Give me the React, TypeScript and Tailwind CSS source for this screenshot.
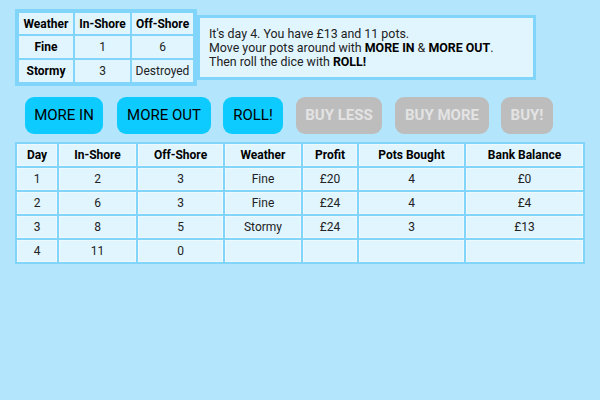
import React from "react";

const F = { fontFamily: "Roboto, 'Noto Sans', sans-serif" };

function Btn({ label, w, on }: { label: string; w: string; on: boolean }) {
  return (
    <div
      className={
        "h-[37px] rounded-[9px] flex items-center justify-center text-[15px] shrink-0 " +
        w +
        (on ? " bg-[#0dcbff] text-black" : " bg-[#bdbdbd] text-[#e3e3e3] font-bold")
      }
    >
      {label}
    </div>
  );
}

export default function App() {
  const rows = [
    ["1", "2", "3", "Fine", "£20", "4", "£0"],
    ["2", "6", "3", "Fine", "£24", "4", "£4"],
    ["3", "8", "5", "Stormy", "£24", "3", "£13"],
    ["4", "11", "0", "", "", "", ""],
  ];
  const heads = ["Day", "In-Shore", "Off-Shore", "Weather", "Profit", "Pots Bought", "Bank Balance"];
  const widths = ["w-[40px]", "w-[77px]", "w-[85px]", "w-[76px]", "w-[54px]", "w-[105px]", "w-[117px]"];
  return (
    <div className="w-[600px] h-[400px] bg-[#b3e5fc] text-[#222] overflow-hidden" style={F}>
      <div className="flex items-center pl-[15px] pt-[9px]">
        <table className="border-separate border-spacing-[2px] bg-[#81d4fa] border-[2px] border-[#81d4fa] text-[12px] w-[182px] shrink-0">
          <tbody>
            <tr className="h-[21px]">
              <th className="bg-[#e1f5fe] font-bold text-black w-[54px] p-0">Weather</th>
              <th className="bg-[#e1f5fe] font-bold text-black w-[55px] p-0">In-Shore</th>
              <th className="bg-[#e1f5fe] font-bold text-black p-0">Off-Shore</th>
            </tr>
            <tr className="h-[22px]">
              <th className="bg-[#e1f5fe] font-bold text-black p-0">Fine</th>
              <td className="bg-[#e1f5fe] text-center p-0">1</td>
              <td className="bg-[#e1f5fe] text-center p-0">6</td>
            </tr>
            <tr className="h-[22px]">
              <th className="bg-[#e1f5fe] font-bold text-black p-0">Stormy</th>
              <td className="bg-[#e1f5fe] text-center p-0">3</td>
              <td className="bg-[#e1f5fe] text-center p-0">Destroyed</td>
            </tr>
          </tbody>
        </table>
        <div className="w-[339px] border-[3px] border-[#81d4fa] bg-[#e1f5fe] pl-[9px] pt-[9px] pb-[8px] text-[12.4px] leading-[14px] shrink-0">
          <div>It's day 4. You have £13 and 11 pots.</div>
          <div>
            Move your pots around with <b className="font-bold text-black">MORE IN</b> &amp;{" "}
            <b className="font-bold text-black">MORE OUT</b>.
          </div>
          <div>
            Then roll the dice with <b className="font-bold text-black">ROLL!</b>
          </div>
        </div>
      </div>
      <div className="flex pl-[25px] mt-[11px]">
        <Btn label="MORE IN" w="w-[78px]" on />
        <div className="w-[14px] shrink-0" />
        <Btn label="MORE OUT" w="w-[94px]" on />
        <div className="w-[12px] shrink-0" />
        <Btn label="ROLL!" w="w-[60px]" on />
        <div className="w-[13px] shrink-0" />
        <Btn label="BUY LESS" w="w-[86px]" on={false} />
        <div className="w-[13px] shrink-0" />
        <Btn label="BUY MORE" w="w-[94px]" on={false} />
        <div className="w-[12px] shrink-0" />
        <Btn label="BUY!" w="w-[52px]" on={false} />
      </div>
      <div className="pl-[15px] mt-[8px]">
        <table className="border-separate border-spacing-[2px] bg-[#81d4fa] text-[12px] w-[570px]">
          <tbody>
            <tr className="h-[22px]">
              {heads.map((h, i) => (
                <th key={h} className={"bg-[#e1f5fe] border border-[#eef9ff] font-bold text-black p-0 " + widths[i]}>
                  {h}
                </th>
              ))}
            </tr>
            {rows.map((r, ri) => (
              <tr key={ri} className="h-[22px]">
                {r.map((c, ci) => (
                  <td key={ci} className="bg-[#e1f5fe] border border-[#eef9ff] text-center p-0">
                    {c}
                  </td>
                ))}
              </tr>
            ))}
          </tbody>
        </table>
      </div>
    </div>
  );
}
